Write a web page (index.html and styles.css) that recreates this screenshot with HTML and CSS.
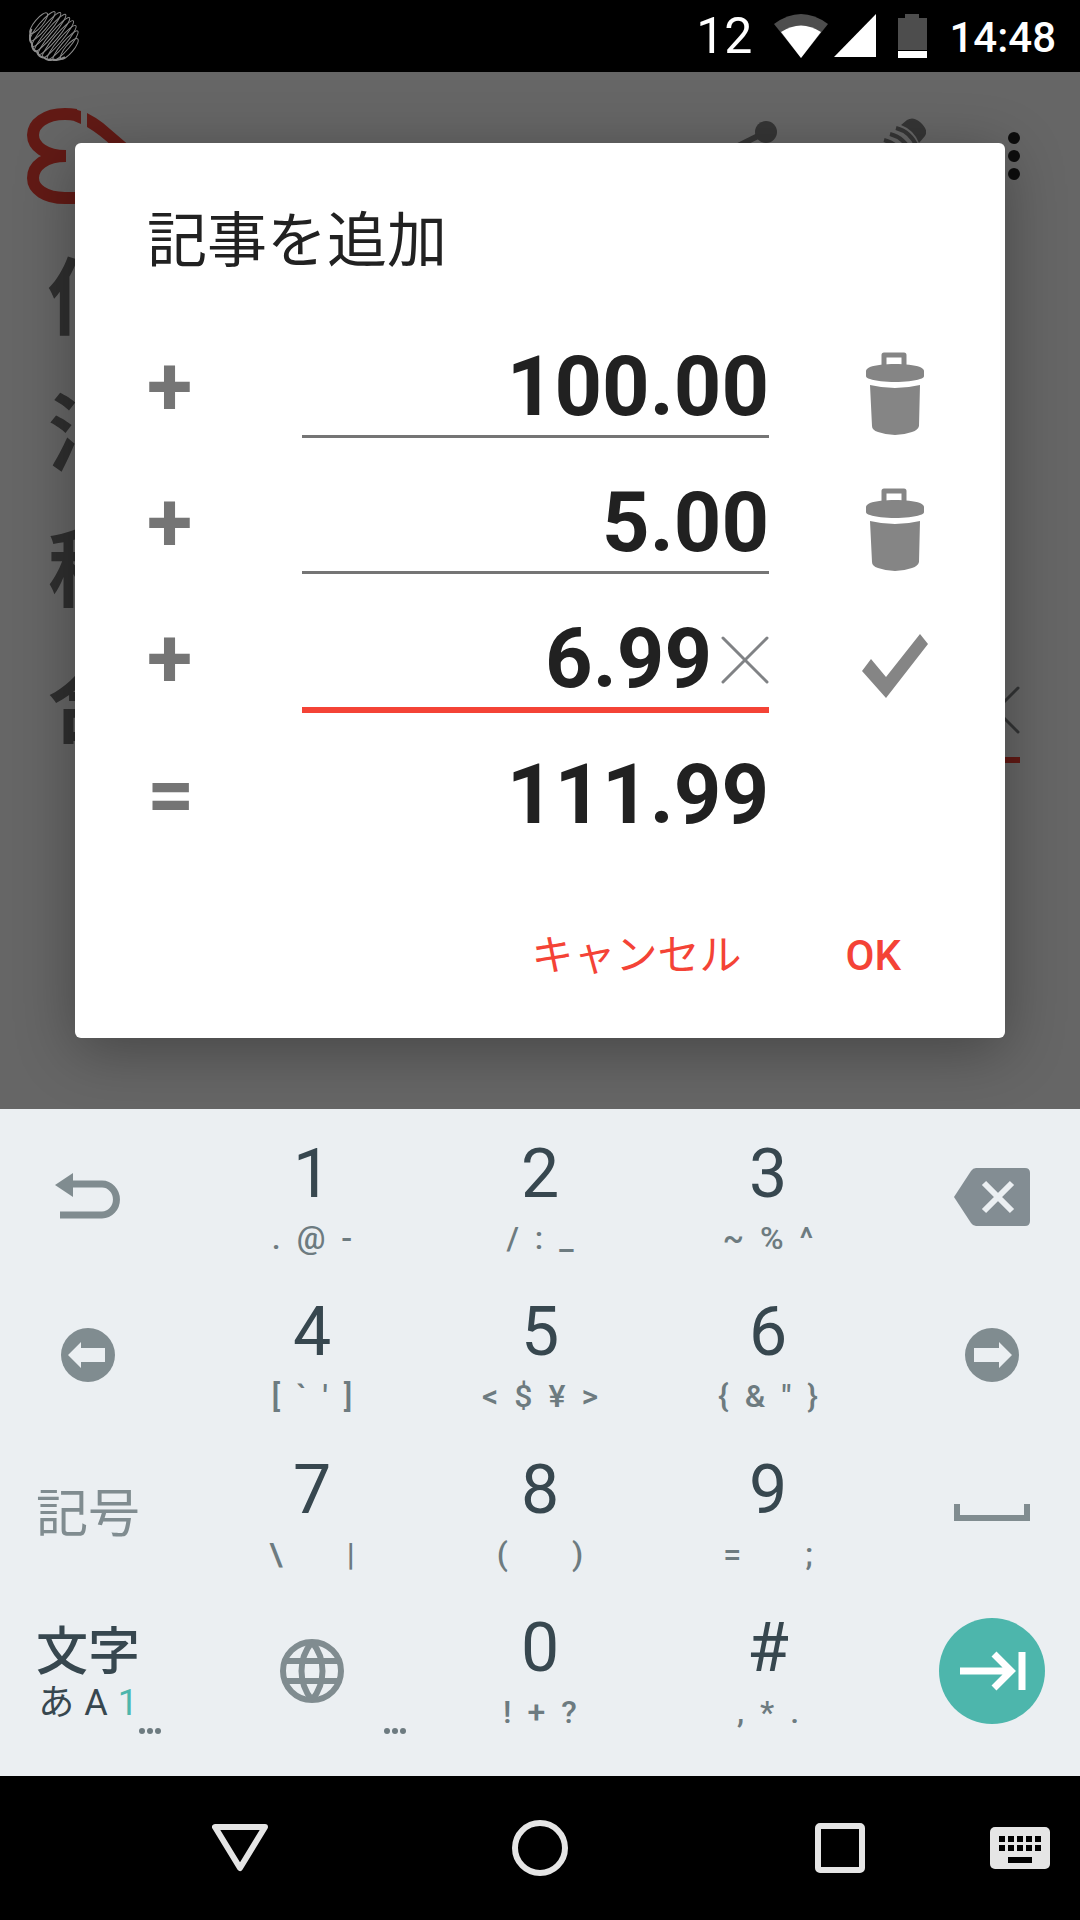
FILE: index.html
```html
<!DOCTYPE html>
<html lang="ja">
<head>
<meta charset="utf-8">
<meta name="viewport" content="width=device-width, initial-scale=1">
<title>記事を追加</title>
<link rel="stylesheet" href="styles.css">
</head>
<body>
<header class="status">
  <svg class="status-orb" width="50" height="50" viewBox="-25 -25 50 50" aria-hidden="true">
    <g fill="none" stroke="#8c8c8c" stroke-width="1" transform="rotate(-50)">
      <ellipse cx="0" cy="-20" rx="13" ry="4"/><ellipse cx="0" cy="-15" rx="19" ry="4"/>
      <ellipse cx="0" cy="-10" rx="22" ry="4"/><ellipse cx="0" cy="-5" rx="24" ry="4"/>
      <ellipse cx="0" cy="0" rx="24" ry="4"/><ellipse cx="0" cy="5" rx="24" ry="4"/>
      <ellipse cx="0" cy="10" rx="22" ry="4"/><ellipse cx="0" cy="15" rx="19" ry="4"/>
      <ellipse cx="0" cy="20" rx="13" ry="4"/>
      <path stroke-width="2" d="M-9 -22Q-20 -17 -20 -12Q-25 -8 -23 -3Q-26 2 -23 6Q-23 12 -19 14Q-17 19 -9 22"/>
    </g>
  </svg>
  <span class="status-count">12</span>
  <span class="status-radio">
    <svg width="54" height="44" viewBox="0 0 54 44" aria-hidden="true"><path fill="#4d4d4d" d="M0 10Q27 -10 54 10L27 44z"/><path fill="#fff" d="M7 18Q27 5 47 18L27 44z"/></svg>
    <svg width="42" height="44" viewBox="0 0 42 44" aria-hidden="true"><path fill="#fff" d="M42 0V43H0z"/></svg>
  </span>
  <svg width="29" height="44" viewBox="0 0 29 44" aria-hidden="true"><path fill="#4d4d4d" d="M7 0H21V4H29V36H0V4H7z"/><path fill="#fff" d="M0 37H29V44H0z"/></svg>
  <time class="status-time">14:48</time>
</header>

<main class="stage">
  <div class="app">
    <div class="app-bar">
      <svg class="app-logo" width="104" height="96" viewBox="0 0 104 96" aria-hidden="true">
        <path fill="none" stroke="#f44336" stroke-width="12" d="M49 7Q44 6 38 6C18 6 6 16 6 27C6 38 18 48 39 48C18 48 6 58 6 70C6 81 18 90 38 90H56"/>
        <path fill="#f44336" d="M47 1L54 3V16L47 13zM60 5Q68 9 76 15L104 39L86 39Q72 26 60 19z"/>
      </svg>
      <button class="icon-button" type="button" aria-label="共有">
        <svg width="84" height="84" viewBox="0 0 84 84"><g fill="#858585"><circle cx="72" cy="18" r="11"/><circle cx="12" cy="48" r="11"/><circle cx="72" cy="72" r="11"/></g><path fill="none" stroke="#858585" stroke-width="6" d="M72 18L12 48L72 72"/></svg>
      </button>
      <button class="icon-button" type="button" aria-label="編集">
        <svg width="84" height="76" viewBox="0 0 84 76"><path fill="#858585" d="M59 7L65 2Q71 -2 78 4Q87 12 83 18L77 25Q72 12 59 7zM30 36L50 54L22 74L2 76L6 56z"/><path fill="none" stroke="#858585" stroke-width="4" d="M54 10Q69 14 75 29M48 16Q63 20 69 35M42 22Q57 26 63 41"/></svg>
      </button>
      <button class="icon-button" type="button" aria-label="メニュー">
        <svg width="48" height="48" viewBox="0 0 48 48" fill="#212121"><circle cx="24" cy="6" r="6"/><circle cx="24" cy="24" r="6"/><circle cx="24" cy="42" r="6"/></svg>
      </button>
    </div>
    <div class="app-rows">
      <div class="app-row">値</div>
      <div class="app-row">消</div>
      <div class="app-row">税</div>
      <div class="app-row">
        <label for="sum">合</label>
        <div class="field app-field">
          <input class="amount amount-active" id="sum" type="text" inputmode="decimal">
          <button class="clear" type="button" aria-label="消去"><svg width="48" height="48" viewBox="0 0 48 48"><path d="M2 2L46 46M46 2L2 46"/></svg></button>
        </div>
      </div>
    </div>
  </div>

  <div class="scrim">
    <form class="dialog" role="dialog" aria-labelledby="dialog-title">
      <h1 class="dialog-title" id="dialog-title">記事を追加</h1>
      <div class="row">
        <label class="sign" for="a1">+</label>
        <div class="field"><input class="amount" id="a1" type="text" inputmode="decimal" value="100.00"></div>
        <button class="row-action" type="button" aria-label="削除"><svg width="58" height="84" viewBox="0 0 58 84"><path fill="none" stroke="#858585" stroke-width="5" stroke-linejoin="round" d="M18 15V3H38V15"/><path fill="#858585" d="M0 19Q0 17 4 15C15 11 43 11 54 15Q58 17 58 19V24Q58 26 54 27C43 31 15 31 4 27Q0 26 0 24zM4 33Q29 39 54 33L53 74Q52 78 46 80Q29 86 12 80Q6 78 6 74z"/></svg></button>
      </div>
      <div class="row">
        <label class="sign" for="a2">+</label>
        <div class="field"><input class="amount" id="a2" type="text" inputmode="decimal" value="5.00"></div>
        <button class="row-action" type="button" aria-label="削除"><svg width="58" height="84" viewBox="0 0 58 84"><path fill="none" stroke="#858585" stroke-width="5" stroke-linejoin="round" d="M18 15V3H38V15"/><path fill="#858585" d="M0 19Q0 17 4 15C15 11 43 11 54 15Q58 17 58 19V24Q58 26 54 27C43 31 15 31 4 27Q0 26 0 24zM4 33Q29 39 54 33L53 74Q52 78 46 80Q29 86 12 80Q6 78 6 74z"/></svg></button>
      </div>
      <div class="row">
        <label class="sign" for="a3">+</label>
        <div class="field">
          <input class="amount amount-active" id="a3" type="text" inputmode="decimal" value="6.99">
          <button class="clear" type="button" aria-label="消去"><svg width="48" height="48" viewBox="0 0 48 48"><path d="M2 2L46 46M46 2L2 46"/></svg></button>
        </div>
        <button class="row-action" type="button" aria-label="確定"><svg width="66" height="64" viewBox="0 0 66 64"><path fill="#858585" d="M0 37L9 25L24 43L58 0L66 10L24 64z"/></svg></button>
      </div>
      <div class="row">
        <span class="sign">=</span>
        <output class="total" for="a1 a2 a3">111.99</output>
      </div>
      <div class="actions">
        <button class="text-button text-button-ja" type="button">キャンセル</button>
        <button class="text-button" type="submit">OK</button>
      </div>
    </form>
  </div>
</main>

<section class="keyboard" aria-label="キーボード">
  <button class="key key-left" type="button" aria-label="戻す"><svg width="66" height="48" viewBox="0 0 66 48"><path fill="#808c90" d="M0 12L18 0V24z"/><path fill="none" stroke="#808c90" stroke-width="7" d="M16 11H47A14 15 0 0 1 47 42H5"/></svg></button>
  <button class="key key-num" type="button"><span class="digit">1</span><span class="subs"><i>.</i><i>@</i><i>-</i></span></button>
  <button class="key key-num" type="button"><span class="digit">2</span><span class="subs"><i>/</i><i>:</i><i>_</i></span></button>
  <button class="key key-num" type="button"><span class="digit">3</span><span class="subs"><i>~</i><i>%</i><i>^</i></span></button>
  <button class="key key-right" type="button" aria-label="削除"><svg width="76" height="58" viewBox="0 0 76 58"><path fill="#838d93" d="M0 29L17 3Q19 0 22 0H71Q76 0 76 5V53Q76 58 71 58H22Q19 58 17 55z"/><path stroke="#ebeff2" stroke-width="6" d="M30 15L58 43M58 15L30 43"/></svg></button>

  <button class="key key-left" type="button" aria-label="左へ"><svg width="54" height="54" viewBox="0 0 54 54"><circle cx="27" cy="27" r="27" fill="#808c90"/><path fill="#ebeff2" d="M7 27L20 14V20H44V34H20V40z"/></svg></button>
  <button class="key key-num" type="button"><span class="digit">4</span><span class="subs"><i>[</i><i>`</i><i>'</i><i>]</i></span></button>
  <button class="key key-num" type="button"><span class="digit">5</span><span class="subs"><i>&lt;</i><i>$</i><i>¥</i><i>&gt;</i></span></button>
  <button class="key key-num" type="button"><span class="digit">6</span><span class="subs"><i>{</i><i>&amp;</i><i>"</i><i>}</i></span></button>
  <button class="key key-right" type="button" aria-label="右へ"><svg width="54" height="54" viewBox="0 0 54 54"><circle cx="27" cy="27" r="27" fill="#808c90"/><path fill="#ebeff2" d="M47 27L34 14V20H9V34H34V40z"/></svg></button>

  <button class="key key-left key-symbols" type="button">記号</button>
  <button class="key key-num" type="button"><span class="digit">7</span><span class="subs subs-wide"><i>\</i><i>|</i></span></button>
  <button class="key key-num" type="button"><span class="digit">8</span><span class="subs subs-wide"><i>(</i><i>)</i></span></button>
  <button class="key key-num" type="button"><span class="digit">9</span><span class="subs subs-wide"><i>=</i><i>;</i></span></button>
  <button class="key key-right" type="button" aria-label="スペース"><svg width="76" height="18" viewBox="0 0 76 18"><path fill="none" stroke="#808c90" stroke-width="6" d="M3 0V14H73V0"/></svg></button>

  <button class="key key-left key-mode" type="button"><span class="mode-main">文字</span><span class="mode-list"><i>あ</i><i>A</i><i class="mode-on">1</i></span><svg class="more" width="22" height="6" viewBox="0 0 22 6"><circle cx="3" cy="3" r="3"/><circle cx="11" cy="3" r="3"/><circle cx="19" cy="3" r="3"/></svg></button>
  <button class="key" type="button" aria-label="言語"><svg width="64" height="64" viewBox="0 0 64 64"><g fill="none" stroke="#808c90" stroke-width="6"><circle cx="32" cy="32" r="29"/><path d="M6 22H58M6 42H58M32 3C18 20 18 44 32 61M32 3C46 20 46 44 32 61"/></g></svg><svg class="more" width="22" height="6" viewBox="0 0 22 6"><circle cx="3" cy="3" r="3"/><circle cx="11" cy="3" r="3"/><circle cx="19" cy="3" r="3"/></svg></button>
  <button class="key key-num" type="button"><span class="digit">0</span><span class="subs"><i>!</i><i>+</i><i>?</i></span></button>
  <button class="key key-num" type="button"><span class="digit">#</span><span class="subs"><i>,</i><i>*</i><i>.</i></span></button>
  <button class="key key-right" type="button" aria-label="次へ"><svg width="106" height="106" viewBox="0 0 106 106"><circle cx="53" cy="53" r="53" fill="#4db6ac"/><path fill="none" stroke="#fff" stroke-width="7" d="M21 53H72M55 36L72 53L55 70M83 34V72"/></svg></button>
</section>

<nav class="nav">
  <button class="nav-button nav-back" type="button" aria-label="戻る"><svg width="56" height="48" viewBox="0 0 56 48"><path fill="none" stroke="#e5e5e5" stroke-width="6" stroke-linejoin="round" d="M3 3H53L28 44z"/></svg></button>
  <button class="nav-button" type="button" aria-label="ホーム"><svg width="56" height="56" viewBox="0 0 56 56"><circle cx="28" cy="28" r="25" fill="none" stroke="#e5e5e5" stroke-width="6"/></svg></button>
  <button class="nav-button" type="button" aria-label="履歴"><svg width="50" height="50" viewBox="0 0 50 50"><rect x="3" y="3" width="44" height="44" rx="2" fill="none" stroke="#e5e5e5" stroke-width="6"/></svg></button>
  <button class="nav-button nav-ime" type="button" aria-label="入力方法"><svg width="60" height="42" viewBox="0 0 60 42"><rect width="60" height="42" rx="5" fill="#e5e5e5"/><path stroke="#000" stroke-width="6" stroke-dasharray="6 3" d="M9 12H51M9 21H51"/><path fill="#000" d="M18 30H42V36H18z"/></svg></button>
</nav>
</body>
</html>
```
FILE: styles.css
```css
* { box-sizing: border-box; }

body {
  margin: 0;
  min-height: 100vh;
  display: flex;
  flex-direction: column;
  background: #000;
  font-family: Roboto, "Noto Sans CJK JP", sans-serif;
  color: #212121;
}

button {
  display: flex;
  align-items: center;
  justify-content: center;
  padding: 0;
  border: 0;
  background: none;
  color: inherit;
  font: inherit;
}

svg { display: block; flex: none; }
i { font-style: normal; }

/* status bar */
.status {
  display: flex;
  align-items: center;
  gap: 22px;
  height: 72px;
  padding: 0 24px 0 29px;
  color: #fff;
}
.status-orb { margin-right: auto; }
.status-count { font-size: 50px; line-height: 72px; }
.status-radio { display: flex; gap: 6px; }
.status-time {
  padding-top: 4px;
  font-size: 42px;
  font-weight: 500;
  line-height: 68px;
}

/* screen behind the dialog */
.stage {
  position: relative;
  flex: 1;
  overflow: hidden;
  background: #fff;
}
.app-bar {
  display: flex;
  align-items: center;
  gap: 64px;
  height: 160px;
  padding: 8px 42px 0 27px;
}
.app-logo { margin-right: auto; }
.app-row {
  display: flex;
  height: 136px;
  padding: 0 60px 0 48px;
  color: #757575;
  font-size: 84px;
  font-weight: 700;
  line-height: 136px;
}
.app-field { width: 467px; margin-left: auto; }

/* dialog */
.scrim {
  position: absolute;
  inset: 0;
  display: flex;
  align-items: center;
  justify-content: center;
  padding: 0 75px;
  background: rgba(0, 0, 0, .6);
}
.dialog {
  width: 100%;
  padding: 0 72px;
  border-radius: 6px;
  background: #fff;
  box-shadow: 0 12px 60px rgba(0, 0, 0, .32);
}
.dialog-title {
  margin: 0;
  padding-top: 23px;
  font-size: 60px;
  font-weight: 400;
  line-height: 152px;
}
.row {
  display: grid;
  grid-template-columns: 155px 1fr 164px;
  height: 136px;
  font-size: 83px;
  font-weight: 700;
  line-height: 138px;
}
.sign { color: #757575; }
.field { position: relative; padding-top: 20px; }
.amount {
  display: block;
  width: 100%;
  height: 100px;
  padding: 0;
  border: 0;
  border-bottom: 3px solid #757575;
  border-radius: 0;
  outline: 0;
  background: none;
  color: #212121;
  font: inherit;
  line-height: 96px;
  text-align: right;
}
.amount-active {
  height: 103px;
  padding-right: 57px;
  border-bottom: 6px solid #f44336;
}
.clear {
  position: absolute;
  right: 0;
  top: 46px;
}
.clear path { stroke: #808285; stroke-width: 3; stroke-linecap: round; }
.row-action { justify-self: end; width: 76px; padding-top: 14px; }
.total { text-align: right; }
.actions {
  display: flex;
  align-items: center;
  justify-content: flex-end;
  gap: 40px;
  height: 176px;
  padding-top: 10px;
}
.text-button {
  height: 108px;
  padding: 0 32px;
  color: #f44336;
  font-size: 42px;
  font-weight: 500;
}
.text-button-ja { padding-bottom: 8px; font-weight: 400; }

/* keyboard */
.keyboard {
  display: grid;
  grid-template-columns: 198px 1fr 1fr 1fr 198px;
  grid-auto-rows: 158px;
  padding: 9px 0 26px;
  background: #ebeff2;
  color: #37474f;
}
.key { position: relative; }
.key-left { padding-right: 22px; }
.key-right { padding-left: 22px; }
.key-num {
  flex-direction: column;
  justify-content: flex-start;
  padding-top: 16px;
}
.digit { font-size: 68px; line-height: 80px; }
.subs {
  display: flex;
  gap: 16px;
  color: #6d7b80;
  font-size: 32px;
  font-weight: 500;
  line-height: 48px;
}
.subs-wide { gap: 64px; }
.key-symbols { padding-bottom: 8px; color: #808c90; font-size: 52px; }
.key-mode { flex-direction: column; padding-top: 4px; }
.mode-main { font-size: 52px; font-weight: 500; line-height: 60px; }
.mode-list {
  display: flex;
  gap: 10px;
  font-size: 36px;
  font-weight: 400;
  line-height: 40px;
}
.mode-on { color: #4db6ac; }
.more {
  position: absolute;
  right: 20px;
  bottom: 16px;
  fill: #6d7b80;
}
.key-left .more { right: 37px; }

/* navigation bar */
.nav {
  display: grid;
  grid-template-columns: 1fr 1fr 1fr 60px;
  height: 144px;
  padding: 0 30px 0 90px;
}
```
